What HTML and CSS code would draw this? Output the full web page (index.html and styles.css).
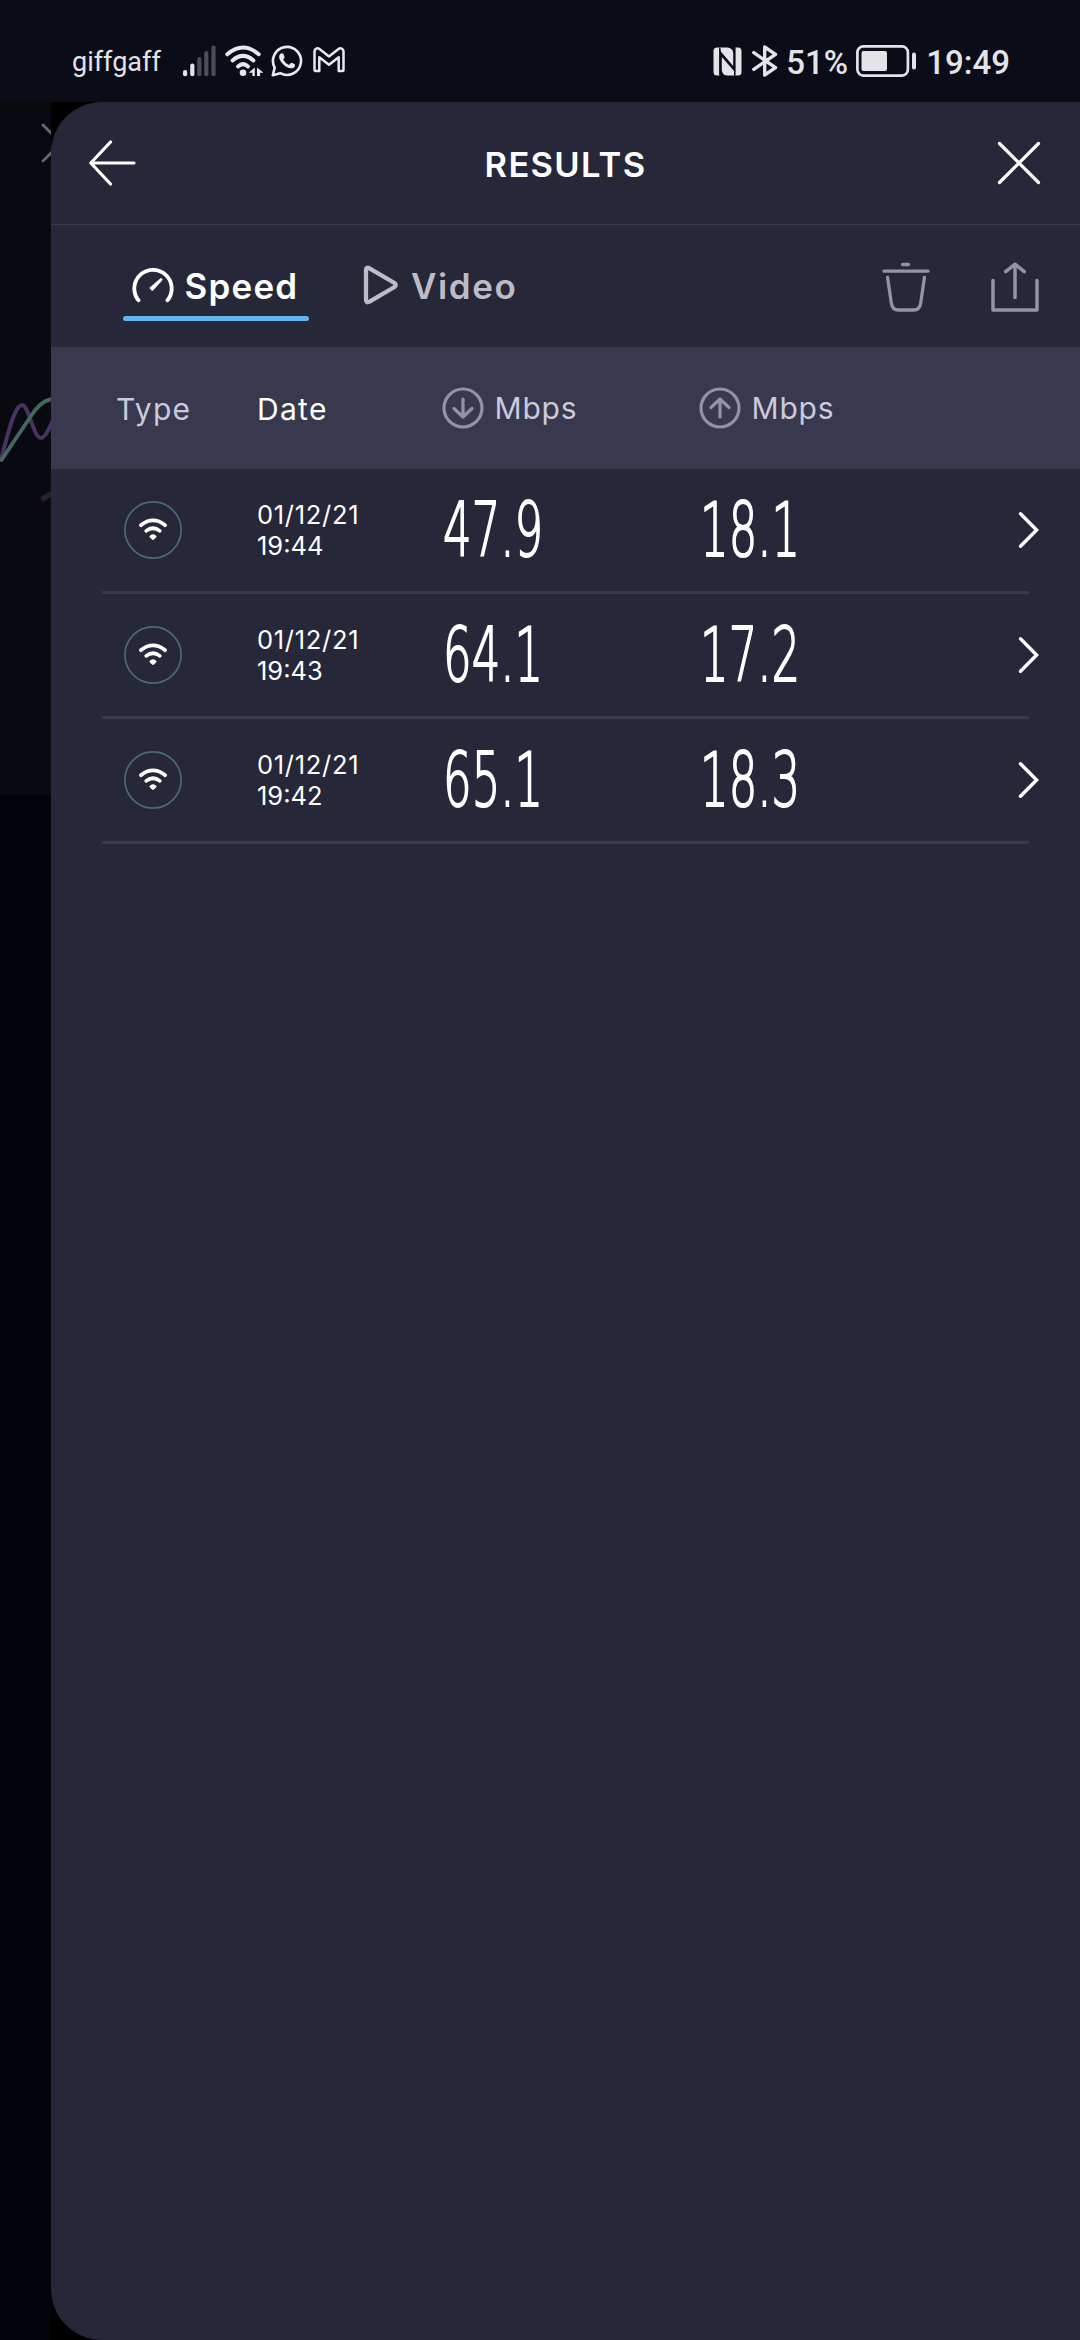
FILE: index.html
```html
<!DOCTYPE html>
<html lang="en">
<head>
<meta charset="utf-8">
<title>Results</title>
<link rel="stylesheet" href="styles.css">
</head>
<body>
<svg class="defs" width="0" height="0">
  <symbol id="wifi" viewBox="0 0 58 58">
    <circle cx="29" cy="29" r="28.1" fill="none" stroke="#4b6a75" stroke-width="1.7"/>
    <g fill="none" stroke="#fff" stroke-width="3.7" stroke-linecap="round">
      <path d="M16.8 24.2Q29 14.6 41.2 24.2"/>
      <path d="M22.2 29.9Q29 24.6 35.8 29.9"/>
    </g>
    <path d="M25.3 35.2Q29 31.3 32.7 35.2Q32.4 36.4 29.9 38.6Q29 39.4 28.1 38.6Q25.6 36.4 25.3 35.2Z" fill="#fff"/>
  </symbol>
  <symbol id="chevron" viewBox="0 0 22 38">
    <path d="M2.5 2.8L18.6 19L2.5 35.2" fill="none" stroke="#fff" stroke-width="3.4" stroke-linecap="round"/>
  </symbol>
</svg>
<header class="status">
  <div class="status-left">
    <span class="carrier">giffgaff</span>
    <svg class="signal" width="33" height="32" viewBox="0 0 33 32">
      <g fill="#e4e4e8"><rect x="0" y="25" width="4.2" height="6.3" rx="2"/><rect x="7.2" y="18.5" width="4.2" height="12.8" rx="2"/></g>
      <g fill="#4c4d58"><rect x="14.2" y="12" width="4.2" height="19.3" rx="2"/><rect x="21.2" y="6" width="4.2" height="25.3" rx="2"/><rect x="28.4" y=".5" width="4.2" height="30.8" rx="2"/></g>
    </svg>
    <svg class="net" width="39" height="32" viewBox="0 0 39 32">
      <g fill="none" stroke="#e8e8ec" stroke-width="4" stroke-linecap="round">
        <path d="M2.3 9.3Q18 -4.3 33.7 9.3"/><path d="M7.6 15.4Q18 6.4 28.4 15.4"/><path d="M13 21.4Q18 17 23 21.4"/>
      </g>
      <circle cx="18" cy="27.8" r="3.3" fill="#e8e8ec"/>
      <path d="M29.800 22.500v8.500h-2.400v-3.200h-3.600zM32 31v-8.500l6.500 5.300h-3.400V31z" fill="#e8e8ec"/>
    </svg>
    <svg class="chat" width="32" height="32" viewBox="0 0 32 32">
      <path d="M1.8 30.2L3.7 22.6A14 14 0 1 1 9.3 28.2Z" fill="none" stroke="#e8e8ec" stroke-width="2.6" stroke-linejoin="round"/>
      <path d="M9.700 8.600Q11.400 7.600 12.400 9L13.600 12Q13.600 13 12.100 14.500Q14.200 18.400 18 20L19.800 18Q20.500 17.500 21.300 17.900L24 19.400Q24.300 22.300 21.500 23.200C15.500 24.500 6.500 15.500 8.300 10.300Z" fill="#e8e8ec"/>
    </svg>
    <svg class="mail" width="32" height="26" viewBox="0 0 32 26">
      <path d="M1.500 23V4.500C1.500 1.500 4.500.5 6.500 2.100L16 9.500L25.500 2.100C27.500.5 30.500 1.500 30.500 4.500V23Q30.500 24 29.500 24H25.700V10.300L16 17.800L6.300 10.300V24H2.500Q1.500 24 1.500 23Z" fill="none" stroke="#e8e8ec" stroke-width="2.500" stroke-linejoin="round"/>
    </svg>
  </div>
  <div class="status-right">
    <svg class="nfc" width="29" height="29" viewBox="0 0 29 29">
      <path d="M4 .5H6.500V28.500H4Q.5 28.500.5 25V4Q.5.500 4 .500Z" fill="#e4e4e8"/>
      <path d="M22.500.5H25Q28.500.5 28.500 4V25Q28.500 28.500 25 28.500H22.500Z" fill="#e4e4e8"/>
      <path d="M7 .5H14.500Q19.800 1 20.200 6V19L7.800 4.500ZM21.500 28.500H14Q9.200 28 8.800 23V10L21.500 24.500Z" fill="#e4e4e8"/>
      <path d="M6.800 28V1M21.600 1V28" stroke="#0a0c18" stroke-width="1.200"/>
    </svg>
    <svg class="bt" width="26" height="32" viewBox="0 0 26 32">
      <path d="M1.800 7.600L23.500 22.700L12.700 30V2L23.500 9.300L1.800 24.400" fill="none" stroke="#e4e4e8" stroke-width="3.400" stroke-linecap="round" stroke-linejoin="round"/>
    </svg>
    <span class="pct">51%</span>
    <svg class="battery" width="61" height="32" viewBox="0 0 61 32">
      <rect x="1.400" y="1.400" width="50.500" height="29.200" rx="6" fill="none" stroke="#e4e4e8" stroke-width="2.700"/>
      <rect x="5.500" y="6" width="25.500" height="20" rx="2" fill="#e4e4e8"/>
      <rect x="56" y="7.500" width="4" height="17" rx="2" fill="#e4e4e8"/>
    </svg>
    <span class="clock">19:49</span>
  </div>
</header>
<div class="stage">
  <aside class="behind">
    <svg width="51" height="693" viewBox="0 102 51 693">
      <g fill="none" stroke-linecap="round">
        <path d="M43 125L61 143L43 161" stroke="#68686b" stroke-width="2.800"/>
        <path d="M1 459C7 438 14 405 22 405C29 405 33 438 41 438C45 438 49 429 53 420" stroke="#4b3263" stroke-width="3.800"/>
        <path d="M1.500 460L31 416Q41 400 53 399" stroke="#41695f" stroke-width="3.800"/>
        <path d="M43.500 498.500Q48 495 55 492" stroke="#242428" stroke-width="5.500"/>
        <path d="M53 508H56" stroke="#242428" stroke-width="5"/>
      </g>
    </svg>
  </aside>
  <div class="frame">
    <main class="panel">
      <div class="titlebar">
        <svg width="48" height="48" viewBox="0 0 48 48"><path d="M45 24H2M21.500 3L1.800 24L21.500 45" fill="none" stroke="#fff" stroke-width="3.200" stroke-linecap="round" stroke-linejoin="round"/></svg>
        <h1>RESULTS</h1>
        <svg width="44" height="44" viewBox="0 0 44 44"><path d="M2.500 2.500L41.500 41.500M41.500 2.500L2.500 41.500" fill="none" stroke="#fff" stroke-width="3.200" stroke-linecap="round"/></svg>
      </div>
      <nav class="tabs">
        <div class="tab active">
          <svg width="42" height="36" viewBox="0 0 42 36">
            <path d="M6.500 33.300A18.700 18.700 0 1 1 35.500 33.300" fill="none" stroke="#fff" stroke-width="3.800" stroke-linecap="round"/>
            <path d="M18 20.300L28.500 11.300Q31.200 11.300 30.200 13.600L21 23.600Q20.300 24.400 19.600 23.600L17.700 21.400Q17.300 20.800 18 20.300Z" fill="#fff"/>
          </svg>
          <span class="speed">Speed</span>
        </div>
        <div class="tab">
          <svg width="36" height="40" viewBox="0 0 36 40"><path d="M3 5.200Q3 1.500 6.500 3.300L31.500 18Q34 20 31.500 22L6.500 36.700Q3 38.500 3 34.800Z" fill="none" stroke="#bdbbc7" stroke-width="4.300" stroke-linejoin="round"/></svg>
          <span class="video">Video</span>
        </div>
        <div class="actions">
          <svg width="50" height="50" viewBox="0 0 50 50"><path d="M21.500 2.500H27.500M3 9.200H47M6.600 15.500L10.300 41Q11.300 48 17.500 48H32.500Q38.700 48 39.700 41L43.400 15.500" fill="none" stroke="#9394a9" stroke-width="3.300" stroke-linecap="round"/></svg>
          <svg width="50" height="50" viewBox="0 0 50 50"><path d="M3 18.500V48H47V18.500M25 35.500V3M15.700 9.700L25 2.200L34.300 9.700" fill="none" stroke="#9394a9" stroke-width="3.500" stroke-linecap="round" stroke-linejoin="round"/></svg>
        </div>
      </nav>
      <div class="grid head">
        <span class="type">Type</span>
        <span class="date-head">Date</span>
        <span class="unit"><svg width="42" height="42" viewBox="0 0 42 42"><g fill="none" stroke="#9293a8" stroke-width="3.200" stroke-linecap="round" stroke-linejoin="round"><circle cx="21" cy="21" r="19"/><path d="M21 12V30M12 21.500L21 30L30 21.500"/></g></svg><span>Mbps</span></span>
        <span class="unit"><svg width="42" height="42" viewBox="0 0 42 42"><g fill="none" stroke="#9293a8" stroke-width="3.200" stroke-linecap="round" stroke-linejoin="round"><circle cx="21" cy="21" r="19"/><path d="M21 30V12M12 20.500L21 12L30 20.500"/></g></svg><span>Mbps</span></span>
      </div>
      <section class="rows">
        <div class="grid row">
          <svg class="wifi" width="58" height="58"><use href="#wifi"/></svg>
          <time><span class="day">01/12/21</span><span>19:44</span></time>
          <span class="num">47.9</span>
          <span class="num">18.1</span>
          <svg class="go" width="22" height="38"><use href="#chevron"/></svg>
        </div>
        <div class="grid row">
          <svg class="wifi" width="58" height="58"><use href="#wifi"/></svg>
          <time><span class="day">01/12/21</span><span>19:43</span></time>
          <span class="num">64.1</span>
          <span class="num">17.2</span>
          <svg class="go" width="22" height="38"><use href="#chevron"/></svg>
        </div>
        <div class="grid row">
          <svg class="wifi" width="58" height="58"><use href="#wifi"/></svg>
          <time><span class="day">01/12/21</span><span>19:42</span></time>
          <span class="num">65.1</span>
          <span class="num">18.3</span>
          <svg class="go" width="22" height="38"><use href="#chevron"/></svg>
        </div>
      </section>
    </main>
  </div>
</div>
</body>
</html>
```
FILE: styles.css
```css
* { box-sizing: border-box; }
body {
  margin: 0;
  width: 1080px;
  height: 2340px;
  overflow: hidden;
  display: flex;
  flex-direction: column;
  background: #000;
  color: #fff;
  font-family: Inter, "Open Sans", sans-serif;
}
svg { display: block; flex: none; }
.defs { display: none; }

.status {
  height: 102px;
  flex: none;
  display: flex;
  justify-content: space-between;
  padding: 0 70px 0 72px;
  background: #0a0c18;
  color: #e4e4e8;
  font-family: Roboto, sans-serif;
}
.status-left, .status-right { display: flex; height: 122px; align-items: center; }
.carrier { font-size: 27px; line-height: 32px; width: 110.500px; padding-top: 1px; }
.signal { margin-right: 9.500px; }
.net { margin-right: 6.500px; }
.chat { margin-right: 10px; }
.mail { margin-top: -2px; }
.nfc { margin-right: 10px; }
.bt { margin-right: 8px; }
.pct, .clock { font-size: 33px; font-weight: 500; line-height: 38px; padding-top: 3px; white-space: nowrap; }
.pct { width: 70px; }
.battery { margin-right: 9px; }

.stage { flex: 1; display: grid; grid-template-columns: 51px 1fr; }
.behind { background: #030409; }
.behind svg { background: #090a0f; }
.frame { background: #000; display: flex; }
.panel {
  flex: 1;
  background: #262738;
  border-radius: 51px 0 0 51px;
  overflow: hidden;
}

.titlebar {
  height: 123px;
  border-bottom: 1px solid #3a3b4e;
  display: flex;
  align-items: center;
  justify-content: space-between;
  padding: 0 39px 0 38px;
}
h1 { margin: 4px 3px 0 0; font-size: 34.500px; font-weight: 600; line-height: 40px; letter-spacing: 1.300px; }

.tabs { height: 122px; display: flex; padding: 0 40px 0 72px; }
.tab {
  height: 96px;
  display: flex;
  align-items: center;
  padding: 26px 0 3px;
  color: #bdbbc7;
  font-size: 35px;
  font-weight: 600;
  line-height: 40px;
}
.tab span { margin: 2px 0 0 10.500px; letter-spacing: 1.200px; }
.tab .video { letter-spacing: 1.600px; margin-left: 12px; }
.tab.active { width: 186px; padding-left: 9px; color: #fff; position: relative; }
.tab.active::after { content: ""; position: absolute; left: 0; right: 0; bottom: 0; height: 5px; border-radius: 2.500px; background: #61b5f1; }
.tab + .tab { margin-left: 54px; }
.actions { margin-left: auto; display: flex; gap: 59px; padding-top: 36.500px; }

.grid { display: grid; grid-template-columns: 141px 185px 257px 1fr auto; align-items: center; }
.head {
  height: 122px;
  background: #38394e;
  padding-left: 65px;
  color: #c9cadb;
  font-size: 30px;
  line-height: 36px;
}
.type, .date-head { letter-spacing: 1.300px; padding-top: 2px; }
.date-head { color: #fff; }
.unit { display: flex; align-items: center; gap: 10.500px; }
.unit span { letter-spacing: .8px; }

.rows { padding: 0 51px; }
.row { height: 125px; border-bottom: 3px solid #38394e; grid-template-columns: 155px 186px 257px 1fr auto; }
.wifi { margin-left: 22px; }
time { display: flex; flex-direction: column; font-size: 25.500px; line-height: 31px; }
.day { letter-spacing: .7px; }
.num { font-family: "DejaVu Sans", sans-serif; font-weight: 200; font-size: 75px; line-height: 90px; transform: scaleX(.6); transform-origin: 0 50%; -webkit-text-stroke: 2px #fff; }
.go { margin-right: -11px; }
```
